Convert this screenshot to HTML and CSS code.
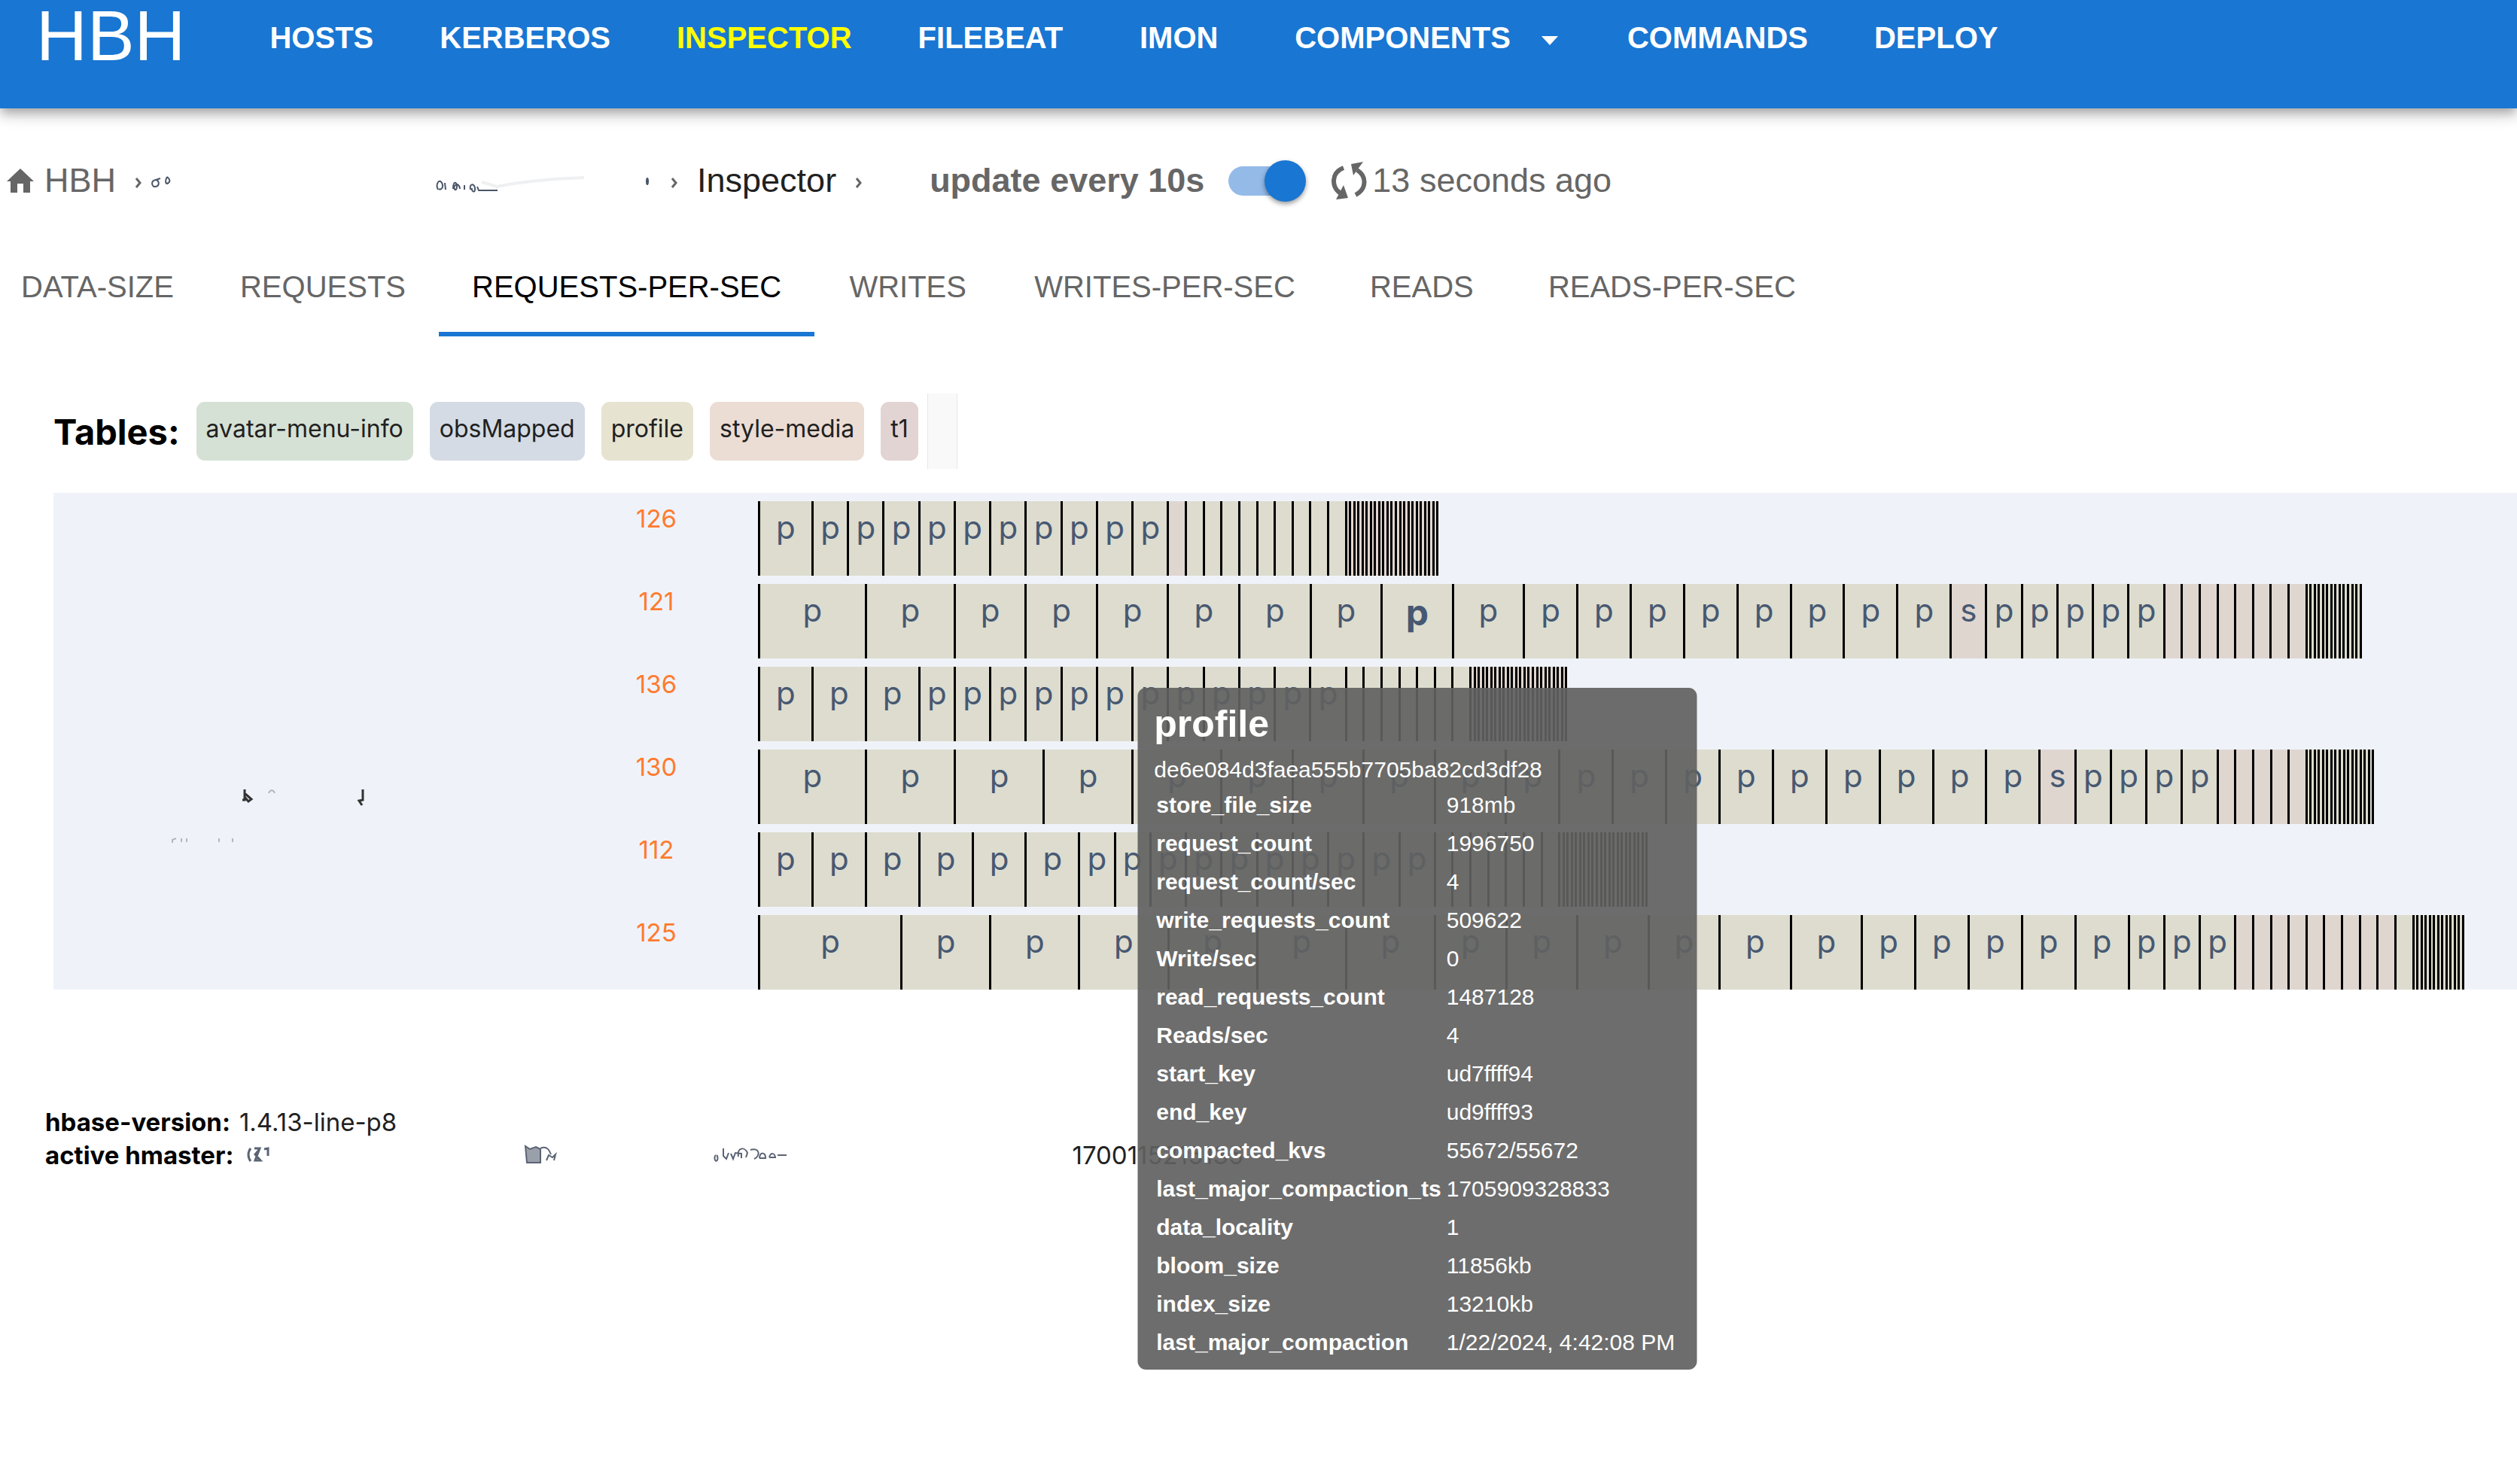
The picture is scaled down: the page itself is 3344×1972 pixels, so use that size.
FILE: index.html
```html
<!DOCTYPE html>
<html lang="en">
<head>
  <meta charset="UTF-8">
  <title>HBH - Inspector</title>
  <link rel="stylesheet" href="styles.css">
</head>
<body>
  <header class="app-bar">
    <a class="logo" href="#">HBH</a>
    <nav class="menu">
      <a href="#">HOSTS</a>
      <a href="#">KERBEROS</a>
      <a class="active" href="#">INSPECTOR</a>
      <a href="#">FILEBEAT</a>
      <a href="#">IMON</a>
      <button type="button">COMPONENTS
        <svg class="caret" viewBox="0 0 22 12"><path d="M0 0h22L11 12z"/></svg>
      </button>
      <a href="#">COMMANDS</a>
      <a href="#">DEPLOY</a>
    </nav>
  </header>

  <div class="status-bar">
    <nav class="breadcrumb">
      <a class="home" href="#">
        <svg viewBox="0 0 36 32"><path d="M18 0L36 17h-5v15h-9V20h-8v12H5V17H0z"/></svg>
        HBH
      </a>
      <svg class="chevron" viewBox="0 0 8 14"><path d="M1 1l5 6-5 6"/></svg>
      <!-- cluster name, masked -->
      <svg class="masked-cluster" viewBox="0 0 680 40">
        <path d="M9 19c-7 1-6 10 0 9 5-1 5-8 0-9l6-2M24 15c-3 5-2 9 0 9 5-2 4-6 0-9"/>
        <path d="M384 32c-4-8 2-15 5-9s-1 10-4 8M394 32l-1-9M404 31c0-11 5-10 5-3s-5 4-3-1c4-5 7 1 7 4M419 32v-6M427 32c-2-8 5-9 6-2s-5 5-4 0M436 28l2 5h25"/>
        <path class="faint" d="M442 22l20 6 22-4 24-3 30-3 40-2"/>
        <ellipse cx="662" cy="21" rx="1" ry="4"/>
      </svg>
      <svg class="chevron" viewBox="0 0 8 14"><path d="M1 1l5 6-5 6"/></svg>
      <a class="current" href="#">Inspector</a>
      <svg class="chevron" viewBox="0 0 8 14"><path d="M1 1l5 6-5 6"/></svg>
    </nav>
    <label class="auto-update" for="auto-update">update every 10s
      <input type="checkbox" id="auto-update" class="switch" checked>
    </label>
    <span class="last-update">
      <svg class="sync" viewBox="0 0 48 50"><path class="arc" d="M17 8C1 14 0 33 13 42M33 44C48 36 48 19 35 11"/><path d="M17 31l6 17-16 2zM27 3l16-3-13 18z"/></svg>
      13 seconds ago
    </span>
  </div>

  <nav class="tabs">
    <a href="#">DATA-SIZE</a>
    <a href="#">REQUESTS</a>
    <a class="selected" href="#">REQUESTS-PER-SEC</a>
    <a href="#">WRITES</a>
    <a href="#">WRITES-PER-SEC</a>
    <a href="#">READS</a>
    <a href="#">READS-PER-SEC</a>
  </nav>

  <main>
    <div class="tables">
      <h2>Tables:</h2>
      <button type="button" class="chip green">avatar-menu-info</button>
      <button type="button" class="chip blue">obsMapped</button>
      <button type="button" class="chip yellow">profile</button>
      <button type="button" class="chip orange">style-media</button>
      <button type="button" class="chip red">t1</button>
      <span class="blank-cell"></span>
    </div>
    <div class="servers" id="servers"></div>
  </main>

  <footer class="info">
    <p><b>hbase-version:</b> 1.4.13-line-p8</p>
    <p><b>active hmaster:</b>
      <svg class="masked-master" viewBox="0 0 1090 30">
        <path d="M11 5c-4 5-4 12 0 17M16 5h7l-6 16h7l-7-8 6-7M29 6l5-1v10" stroke-width="3"/>
        <path class="fill" d="M376 2l6 4 8-3 6 3v18h-18z"/><path d="M396 5c9-4 12 3 14 8M404 21l3-7 5 3 4-4-2 8"/>
        <path d="M629 14a2 4 0 1 0 1 0M639 5v10l4 4 3-8M649 12l3 7 3-8 8 1v6M659 16c-2-12 8-14 12-5l-2 6M675 7c12-4 14 8 5 12M687 18c1-9 8-8 8 0h-8M700 17c2-7 7-6 8 0h-8M711 14h12"/>
      </svg>
      <span>1700115215135</span>
    </p>
  </footer>

  <!-- shown below the hovered region -->
  <template id="region-tooltip">
    <div class="tooltip" role="tooltip">
      <h3>profile</h3>
      <p>de6e084d3faea555b7705ba82cd3df28</p>
      <table>
        <tr><th>store_file_size</th><td>918mb</td></tr>
        <tr><th>request_count</th><td>1996750</td></tr>
        <tr><th>request_count/sec</th><td>4</td></tr>
        <tr><th>write_requests_count</th><td>509622</td></tr>
        <tr><th>Write/sec</th><td>0</td></tr>
        <tr><th>read_requests_count</th><td>1487128</td></tr>
        <tr><th>Reads/sec</th><td>4</td></tr>
        <tr><th>start_key</th><td>ud7ffff94</td></tr>
        <tr><th>end_key</th><td>ud9ffff93</td></tr>
        <tr><th>compacted_kvs</th><td>55672/55672</td></tr>
        <tr><th>last_major_compaction_ts</th><td>1705909328833</td></tr>
        <tr><th>data_locality</th><td>1</td></tr>
        <tr><th>bloom_size</th><td>11856kb</td></tr>
        <tr><th>index_size</th><td>13210kb</td></tr>
        <tr><th>last_major_compaction</th><td>1/22/2024, 4:42:08 PM</td></tr>
      </table>
    </div>
  </template>

  <!-- what is left of a masked host name -->
  <template id="masked-host">
    <svg class="masked-host" viewBox="0 0 731 99">
      <path d="M254 53v14h-3M255 59l8 7-4 3-5-6M411 53v14l-5 1 4 6"/>
      <path class="faint" d="M286 58c2-5 6-5 8 0M158 124v-4l5-2M170 118v5M177 118v5M220 118v5M238 118v5"/>
    </svg>
  </template>

  <script src="regions.js"></script>
</body>
</html>
```
FILE: styles.css
```css
* {
  box-sizing: border-box;
}

body {
  min-height: 100vh;
  margin: 0;
  background: #fff;
  color: #000;
  font-family: "Liberation Sans", Arial, sans-serif;
}

a {
  color: inherit;
  text-decoration: none;
}

button {
  border: none;
  background: none;
  color: inherit;
  font: inherit;
  cursor: pointer;
}

p, h2, h3 {
  margin: 0;
}

/* top bar */
.app-bar {
  display: flex;
  align-items: center;
  padding: 0 48px 48px;
  background: #1976d2;
  color: #fff;
  box-shadow: 0 6px 11px -3px rgba(0, 0, 0, 0.2), 0 11px 14px rgba(0, 0, 0, 0.14), 0 3px 28px rgba(0, 0, 0, 0.12);
}

.logo {
  font-size: 94px;
  line-height: 96px;
}

.menu {
  display: flex;
  margin-left: 68px;
  padding-top: 3px;
  font-size: 40px;
  font-weight: bold;
  line-height: 50px;
}

.menu a,
.menu button {
  min-width: 220px;
  padding: 0 44px;
  text-align: center;
}

.menu .active {
  color: #ff0;
}

.caret {
  width: 22px;
  height: 12px;
  margin-left: 30px;
  margin-right: 4px;
  vertical-align: 4px;
  fill: #fff;
}

/* breadcrumb and refresh state */
.status-bar {
  display: flex;
  align-items: center;
  height: 192px;
  padding-left: 9px;
  color: #666;
  font-size: 45px;
  line-height: 54px;
}

.breadcrumb,
.auto-update,
.last-update {
  display: flex;
  align-items: center;
}

.home {
  display: flex;
  align-items: center;
  gap: 14px;
}

.home svg {
  width: 36px;
  height: 32px;
  fill: #666;
}

.current {
  color: #212121;
}

.chevron {
  width: 8px;
  height: 14px;
  margin: 6px 26px 0;
  fill: none;
  stroke: #666;
  stroke-width: 3;
}

.masked-cluster {
  width: 680px;
  height: 40px;
  margin: 0 -12px 0 -16px;
  fill: none;
  stroke: #4a5568;
  stroke-width: 2;
}

.masked-cluster .faint {
  stroke: #eef0f2;
  stroke-width: 4;
}

.auto-update {
  gap: 32px;
  margin-left: 64px;
  font-weight: bold;
}

.switch {
  appearance: none;
  display: flex;
  align-items: center;
  justify-content: flex-end;
  width: 96px;
  height: 39px;
  margin: 0;
  border-radius: 20px;
  background: #94bae8;
}

.switch::before {
  content: "";
  flex: none;
  width: 55px;
  height: 55px;
  margin-right: -7px;
  border-radius: 50%;
  background: #1976d2;
  box-shadow: 0 3px 6px rgba(0, 0, 0, 0.4);
}

.last-update {
  gap: 7px;
  margin-left: 40px;
}

.sync {
  width: 48px;
  height: 50px;
  fill: #666;
}

.sync .arc {
  fill: none;
  stroke: #666;
  stroke-width: 6;
}

/* metric tabs */
.tabs {
  display: flex;
  margin-left: -16px;
  color: #666;
  font-size: 40px;
  line-height: 48px;
}

.tabs a {
  min-width: 248px;
  padding: 21px 44px 36px;
  border-bottom: 6px solid transparent;
  text-align: center;
}

.tabs .selected {
  border-color: #1976d2;
  color: #000;
}

/* table legend */
main {
  padding: 76px 0 0 71px;
  font-family: Inter, sans-serif;
}

.tables {
  display: flex;
  align-items: center;
  gap: 22px;
  height: 100px;
  margin-bottom: 32px;
}

.tables h2 {
  font-size: 47px;
}

.chip {
  height: 78px;
  padding: 0 13px 8px;
  border-radius: 11px;
  color: #212121;
  font-size: 32px;
}

.green { background: #d6e1d5; }
.blue { background: #d4dbe4; }
.yellow { background: #e6e3d0; }
.orange { background: #ebddd4; }
.red { background: #e2d4d2; }

.blank-cell {
  align-self: stretch;
  width: 40px;
  margin-left: -10px;
  border: solid #e6e6e6;
  border-width: 0 1px;
  background: #f9f9f9;
}

/* region servers */
.servers {
  background: #eff3f9;
}

.server {
  display: grid;
  grid-template-columns: 731px 140px 1fr;
  padding-top: 11px;
}

.masked-host {
  width: 731px;
  height: 99px;
  overflow: visible;
  fill: none;
  stroke: #333;
  stroke-width: 3;
}

.masked-host .faint {
  stroke: #b4b8bd;
  stroke-width: 2;
}

.count {
  grid-column: 2;
  color: #ff7b2e;
  font-size: 33px;
  line-height: 46px;
  text-align: center;
}

.regions {
  display: flex;
  height: 99px;
  margin-left: 65px;
}

.region {
  position: relative;
  flex: none;
  border-left: 3px solid #000;
  background: #dddcce;
  color: #475872;
  font-size: 42px;
  line-height: 70px;
  text-align: center;
}

/* closing line of the bar */
.regions::after {
  content: "";
  width: 3px;
  background: #000;
}

.region.pink {
  background: #e0d6d0;
}

.region.hovered {
  font-size: 48px;
  font-weight: bold;
  line-height: 76px;
}

.tooltip {
  position: absolute;
  z-index: 1;
  top: 138px;
  left: 50%;
  width: max-content;
  padding: 20px 22px 8px;
  border-radius: 11px;
  background: rgba(97, 97, 97, 0.92);
  color: #fff;
  font: 30px/45px "Liberation Sans", Arial, sans-serif;
  text-align: left;
  transform: translateX(-50%);
}

.tooltip h3 {
  font-size: 50px;
  line-height: 56px;
}

.tooltip p {
  margin-top: 10px;
}

.tooltip table {
  margin-top: -4px;
  border-spacing: 3px 6px;
}

.tooltip th,
.tooltip td {
  padding: 0 4px 0 0;
}

/* cluster info */
.info {
  padding: 154px 60px 0;
  font: 33px/44px Inter, sans-serif;
  color: #212121;
}

.info b {
  color: #000;
}

.info p {
  display: flex;
  gap: 12px;
}

.masked-master {
  width: 1090px;
  height: 30px;
  margin-top: 8px;
  fill: none;
  stroke: #5b6474;
  stroke-width: 2;
}

.masked-master .fill {
  fill: #9aa0aa;
}
```
FILE: regions.js
```js
// requests per second of every region, biggest first: [table, value, repeat]
const servers = [
  { count: 126, regions: [['p', 3, 1], ['p', 2, 10], ['t', 1, 1], ['p', 1, 9], ['t', 0, 22]] },
  { count: 121, regions: [['p', 6, 1], ['p', 5, 1], ['p', 4, 8], ['p', 3, 8], ['s', 2, 1], ['p', 2, 5], ['t', 1, 8], ['p', 0, 13]], hovered: 8 },
  { count: 136, regions: [['p', 3, 3], ['p', 2, 12], ['p', 1, 7], ['t', 0, 23]] },
  { count: 130, regions: [['p', 6, 1], ['p', 5, 4], ['p', 4, 4], ['p', 3, 10], ['s', 2, 1], ['p', 2, 4], ['t', 1, 5], ['p', 0, 16]], masked: true },
  { count: 112, regions: [['p', 3, 6], ['p', 2, 10], ['p', 1, 7], ['p', 0, 21]] },
  { count: 125, regions: [['p', 8, 1], ['p', 5, 6], ['p', 4, 6], ['p', 3, 5], ['p', 2, 3], ['t', 1, 9], ['p', 1, 1], ['p', 0, 12]] }
];

const UNIT = 1.0112; // percent of the row per request
const IDLE = 0.237;  // idle regions still get a sliver

const list = document.getElementById('servers');
const tooltip = document.getElementById('region-tooltip');
const maskedHost = document.getElementById('masked-host');

servers.forEach(server => {
  const row = document.createElement('div');
  row.className = 'server';
  row.innerHTML = `<span class="count">${server.count}</span><div class="regions"></div>`;
  const bar = row.querySelector('.regions');

  server.regions.forEach(([table, value, repeat]) => {
    for (let i = 0; i < repeat; i++) {
      const region = document.createElement('div');
      region.className = table === 'p' ? 'region' : 'region pink';
      region.style.width = (value ? value * UNIT : IDLE) + '%';
      if (value > 1) region.textContent = table;
      bar.appendChild(region);
    }
  });

  if (server.masked) {
    row.prepend(maskedHost.content.cloneNode(true));
  }

  if (server.hovered) {
    const region = bar.children[server.hovered];
    region.classList.add('hovered');
    region.appendChild(tooltip.content.cloneNode(true));
  }
  list.appendChild(row);
});
```
